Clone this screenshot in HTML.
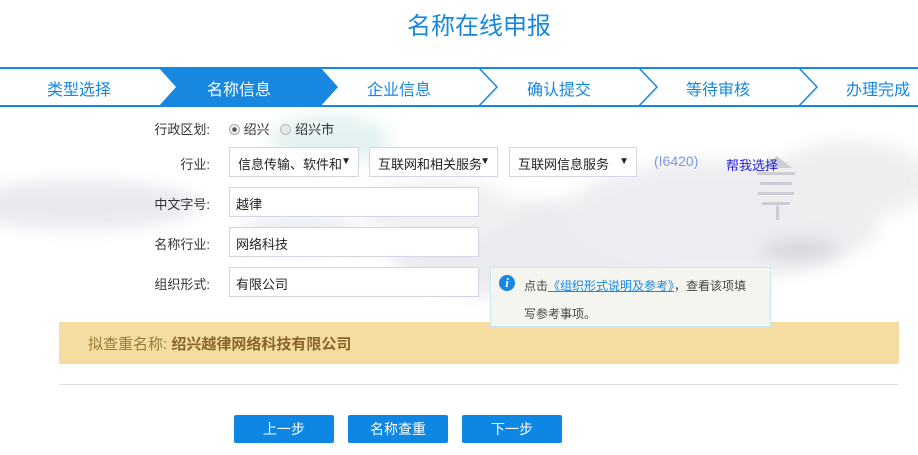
<!DOCTYPE html>
<html><head><meta charset="utf-8"><style>
*{margin:0;padding:0;box-sizing:border-box}
body{width:918px;height:455px;background:#fff;font-family:"Liberation Sans","Noto Sans CJK SC",sans-serif;position:relative;overflow:hidden;font-size:13px;color:#333}
.a{position:absolute}
.title{left:0;width:958px;top:6px;text-align:center;font-size:24px;color:#1787e0}
.bar{left:0;top:67px;width:918px;height:40px;border-top:2px solid #1787e0;border-bottom:2px solid #1787e0}
.st{position:absolute;top:7px;font-size:16px;color:#1787e0;white-space:nowrap}
.lbl{font-size:13px;color:#333;text-align:right;width:110px;left:100px}
.inp{left:229px;width:250px;height:30px;border:1px solid #d4d4e6;background:#fff;padding:6px 6px;font-size:13px;color:#222}
.sel{height:30px;border:1px solid #d4d4e6;background:#fff;padding:6px 22px 6px 8px;font-size:13px;color:#222;white-space:nowrap;overflow:hidden}
.sel b{position:absolute;right:7px;top:8px;font-size:10px}
.btn{top:415px;width:100px;height:28px;background:#0d86e4;color:#fff;text-align:center;line-height:28px;font-size:14px;border-radius:2px}
</style></head><body>
<svg class="a" style="left:0;top:110px" width="918" height="230">
<defs><filter id="b"><feGaussianBlur stdDeviation="8"/></filter></defs>
<g filter="url(#b)" opacity=".9">
<ellipse cx="80" cy="95" rx="120" ry="25" fill="#e6e8ee"/>
<ellipse cx="330" cy="30" rx="60" ry="25" fill="#e0f0f0"/>
<ellipse cx="550" cy="140" rx="160" ry="50" fill="#e8e8ee"/>
<ellipse cx="720" cy="110" rx="160" ry="60" fill="#ececf0"/>
<ellipse cx="850" cy="70" rx="80" ry="40" fill="#ededf0"/>
<ellipse cx="440" cy="100" rx="80" ry="30" fill="#eef0f0"/>
<ellipse cx="300" cy="120" rx="60" ry="20" fill="#eceff2"/>
<ellipse cx="800" cy="140" rx="40" ry="12" fill="#d4d4dc"/>
</g>
<g fill="#c4c4ce" opacity=".8"><rect x="757" y="62" width="38" height="3"/><rect x="760" y="72" width="32" height="3"/><rect x="758" y="82" width="36" height="3"/><rect x="762" y="92" width="28" height="3"/><rect x="776" y="96" width="3" height="14"/><polygon points="762,58 777,46 792,58"/></g>
</svg>
<div class="a title">名称在线申报</div>
<div class="a bar">
<svg class="a" style="left:0;top:-2px" width="918" height="40">
<polygon points="158,0 320,0 338,20 320,40 158,40 176,20" fill="#1787e0"/>
<g fill="none" stroke="#1787e0" stroke-width="1.5"><polyline points="478,0 497,20 478,40"/><polyline points="638,0 657,20 638,40"/><polyline points="798,0 817,20 798,40"/></g>
</svg>
<div class="st" style="left:47px">类型选择</div>
<div class="st" style="left:207px;color:#fff">名称信息</div>
<div class="st" style="left:367px">企业信息</div>
<div class="st" style="left:527px">确认提交</div>
<div class="st" style="left:686px">等待审核</div>
<div class="st" style="left:846px">办理完成</div>
</div>
<div class="a lbl" style="top:119px">行政区划:</div>
<div class="a" style="left:229px;top:119px;white-space:nowrap"><span style="display:inline-block;width:11px;height:11px;border:1px solid #aaa;border-radius:50%;background:radial-gradient(#555 30%,#eee 40%);vertical-align:-1px"></span> 绍兴 &nbsp;&nbsp;<span style="display:inline-block;width:11px;height:11px;border:1px solid #bbb;border-radius:50%;background:#e8e8e8;vertical-align:-1px"></span> 绍兴市</div>
<div class="a lbl" style="top:154px">行业:</div>
<div class="a sel" style="left:229px;top:147px;width:130px">信息传输、软件和<b>▼</b></div>
<div class="a sel" style="left:369px;top:147px;width:129px">互联网和相关服务<b>▼</b></div>
<div class="a sel" style="left:509px;top:147px;width:128px">互联网信息服务<b>▼</b></div>
<div class="a" style="left:654px;top:153px;color:#7a9ad8;font-size:14px">(I6420)</div>
<div class="a" style="left:726px;top:155px;color:#2222dd;font-size:13px">帮我选择</div>
<div class="a lbl" style="top:194px">中文字号:</div>
<div class="a inp" style="top:187px">越律</div>
<div class="a lbl" style="top:234px">名称行业:</div>
<div class="a inp" style="top:227px">网络科技</div>
<div class="a lbl" style="top:274px">组织形式:</div>
<div class="a inp" style="top:267px">有限公司</div>
<div class="a" style="left:59px;top:322px;width:840px;height:42px;background:#f5dca0;font-size:15px;color:#9a7a3a;padding:11px 0 0 29px">拟查重名称: <b style="color:#8a6428">绍兴越律网络科技有限公司</b></div>
<div class="a" style="left:490px;top:267px;width:281px;height:60px;background:#f5f5ef;border:1px solid #c4eaf2;font-size:12px;color:#444;z-index:5">
<div class="a" style="left:8px;top:7px;width:16px;height:16px;border-radius:50%;background:#1787e0;color:#fff;font-weight:bold;font-style:italic;text-align:center;line-height:16px;font-family:'Liberation Serif',serif;font-size:13px">i</div>
<div class="a" style="left:33px;top:9px;white-space:nowrap">点击<span style="color:#1787e0;text-decoration:underline">《组织形式说明及参考》</span>，查看该项填</div>
<div class="a" style="left:33px;top:37px">写参考事项。</div>
</div>
<div class="a" style="left:59px;top:384px;width:840px;height:1px;background:#dde"></div>
<div class="a btn" style="left:234px">上一步</div>
<div class="a btn" style="left:348px">名称查重</div>
<div class="a btn" style="left:462px">下一步</div>
</body></html>
